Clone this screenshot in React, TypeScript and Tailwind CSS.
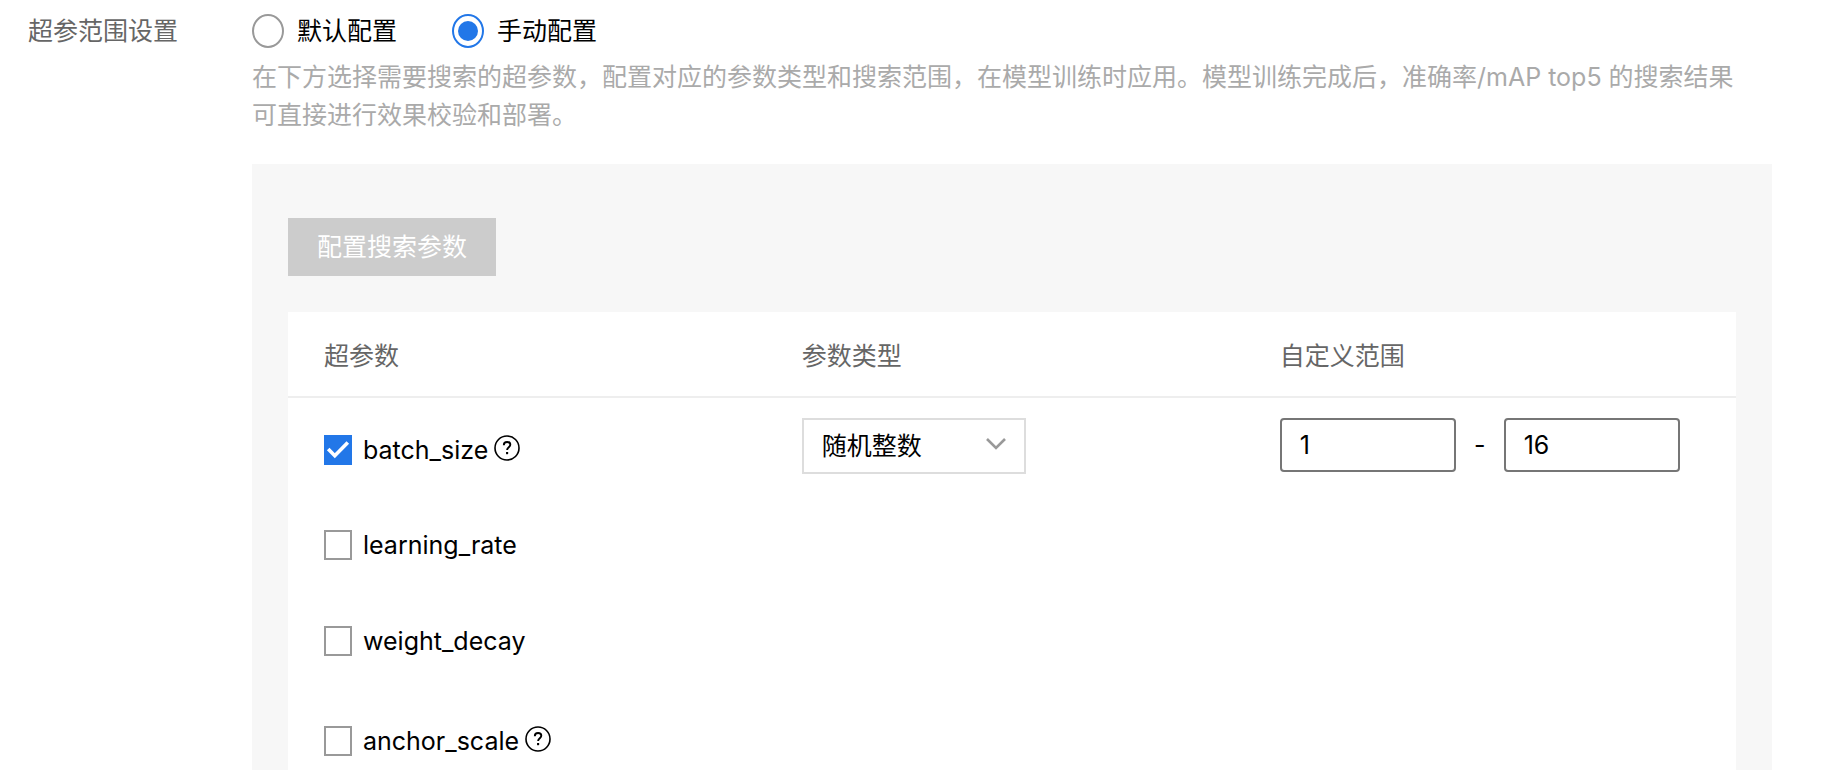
import React, { useState } from 'react';

interface HyperParam {
  name: string;
  hasHelp?: boolean;
  min?: string;
  max?: string;
}

const PARAMS: HyperParam[] = [
  { name: 'batch_size', hasHelp: true, min: '1', max: '16' },
  { name: 'learning_rate' },
  { name: 'weight_decay' },
  { name: 'anchor_scale', hasHelp: true }
];

const HelpIcon: React.FC = () => (
  <svg className="mb-1 size-[26px]" viewBox="0 0 26 26" fill="none" stroke="currentColor" strokeWidth="1.6">
    <circle cx="13" cy="13" r="12" />
    <path d="M9.8 10.2c0-2 1.4-3.2 3.3-3.2s3.2 1.1 3.2 2.8c0 2.3-3.2 2.5-3.2 5.2" strokeWidth="1.9" />
    <path d="M13.1 17v2.2" strokeWidth="2.1" />
  </svg>
);

interface RadioOptionProps {
  label: string;
  checked: boolean;
  onChange: () => void;
}

const RadioOption: React.FC<RadioOptionProps> = ({ label, checked, onChange }) => (
  <label className="flex items-center gap-[13px] text-black cursor-pointer">
    <span className="grid place-items-center">
      <input
        type="radio"
        name="config-mode"
        checked={checked}
        onChange={onChange}
        className="col-start-1 row-start-1 h-[34px] w-8 appearance-none rounded-[50%] border-2 border-[#999] bg-white checked:border-[#2277e8]"
      />
      {checked && <span className="pointer-events-none col-start-1 row-start-1 size-5 rounded-full bg-[#2277e8]" />}
    </span>
    {label}
  </label>
);

const App: React.FC = () => {
  const [mode, setMode] = useState<'default' | 'manual'>('manual');
  const [selected, setSelected] = useState<string[]>(['batch_size']);

  const toggle = (name: string) => {
    setSelected((prev) => (prev.includes(name) ? prev.filter((n) => n !== name) : [...prev, name]));
  };

  return (
    <div className="h-screen overflow-hidden bg-white font-['Inter','Noto_Sans_CJK_SC',sans-serif] text-[25px] leading-[38px] text-[#666]">
      <div className="flex pt-3 pr-[54px] pl-7">
        <div className="w-56 shrink-0">超参范围设置</div>
        <div className="min-w-0 flex-1">
          <div className="flex gap-[55px]">
            <RadioOption label="默认配置" checked={mode === 'default'} onChange={() => setMode('default')} />
            <RadioOption label="手动配置" checked={mode === 'manual'} onChange={() => setMode('manual')} />
          </div>
          <p className="mt-2 pr-6 text-[#aaa]">
            在下方选择需要搜索的超参数，配置对应的参数类型和搜索范围，在模型训练时应用。模型训练完成后，准确率/mAP top5 的搜索结果可直接进行效果校验和部署。
          </p>

          <div className="mt-[30px] bg-[#f7f7f7] px-9 pt-[54px] pb-9">
            <button type="button" disabled className="h-[58px] bg-[#ccc] px-[29px] text-white">
              配置搜索参数
            </button>

            <table className="mt-9 w-full table-fixed bg-white text-left">
              <thead>
                <tr className="h-[85px] border-b-2 border-[#eee]">
                  <th className="w-[33%] pt-1 pl-9 font-normal">超参数</th>
                  <th className="w-[33%] pt-1 pl-9 font-normal">参数类型</th>
                  <th className="w-[34%] pt-1 pl-9 font-normal">自定义范围</th>
                </tr>
              </thead>
              <tbody className="text-black">
                {PARAMS.map((param) => (
                  <tr key={param.name} className="h-24 last:h-[104px]">
                    <td className="pt-2 pl-9">
                      <div className="flex items-center gap-1.5">
                        <label className="flex items-center gap-[11px] cursor-pointer">
                          <span className="grid place-items-center">
                            <input
                              type="checkbox"
                              checked={selected.includes(param.name)}
                              onChange={() => toggle(param.name)}
                              className="col-start-1 row-start-1 h-[30px] w-7 appearance-none border-2 border-[#999] bg-white checked:border-[#2277e8] checked:bg-[#2277e8]"
                            />
                            {selected.includes(param.name) && (
                              <svg className="pointer-events-none col-start-1 row-start-1 size-6" viewBox="0 0 24 24" fill="none" stroke="#fff" strokeWidth="3.6">
                                <path d="M2.2 11l6.6 6.8L21.8 4.6" />
                              </svg>
                            )}
                          </span>
                          <span>{param.name}</span>
                        </label>
                        {param.hasHelp && <HelpIcon />}
                      </div>
                    </td>
                    <td className="pt-5 pl-9 align-top">
                      {param.min && (
                        <div className="grid w-56 items-center">
                          <select
                            aria-label="参数类型"
                            className="col-start-1 row-start-1 h-14 w-full appearance-none border-2 border-[#ddd] bg-white pl-[18px]"
                          >
                            <option>随机整数</option>
                          </select>
                          <svg className="pointer-events-none col-start-1 row-start-1 mr-5 mb-1 h-3 w-5 justify-self-end" viewBox="0 0 20 12" fill="none" stroke="#999" strokeWidth="2.6">
                            <path d="M1 1l9 9 9-9" />
                          </svg>
                        </div>
                      )}
                    </td>
                    <td className="pt-5 pl-9 align-top">
                      {param.min && (
                        <div className="flex items-center">
                          <input
                            aria-label="最小值"
                            defaultValue={param.min}
                            className="h-[54px] w-44 rounded border-2 border-[#767676] bg-white px-[18px]"
                          />
                          <span className="w-12 text-center">-</span>
                          <input
                            aria-label="最大值"
                            defaultValue={param.max}
                            className="h-[54px] w-44 rounded border-2 border-[#767676] bg-white px-[18px]"
                          />
                        </div>
                      )}
                    </td>
                  </tr>
                ))}
              </tbody>
            </table>
          </div>
        </div>
      </div>
    </div>
  );
};

export default App;
